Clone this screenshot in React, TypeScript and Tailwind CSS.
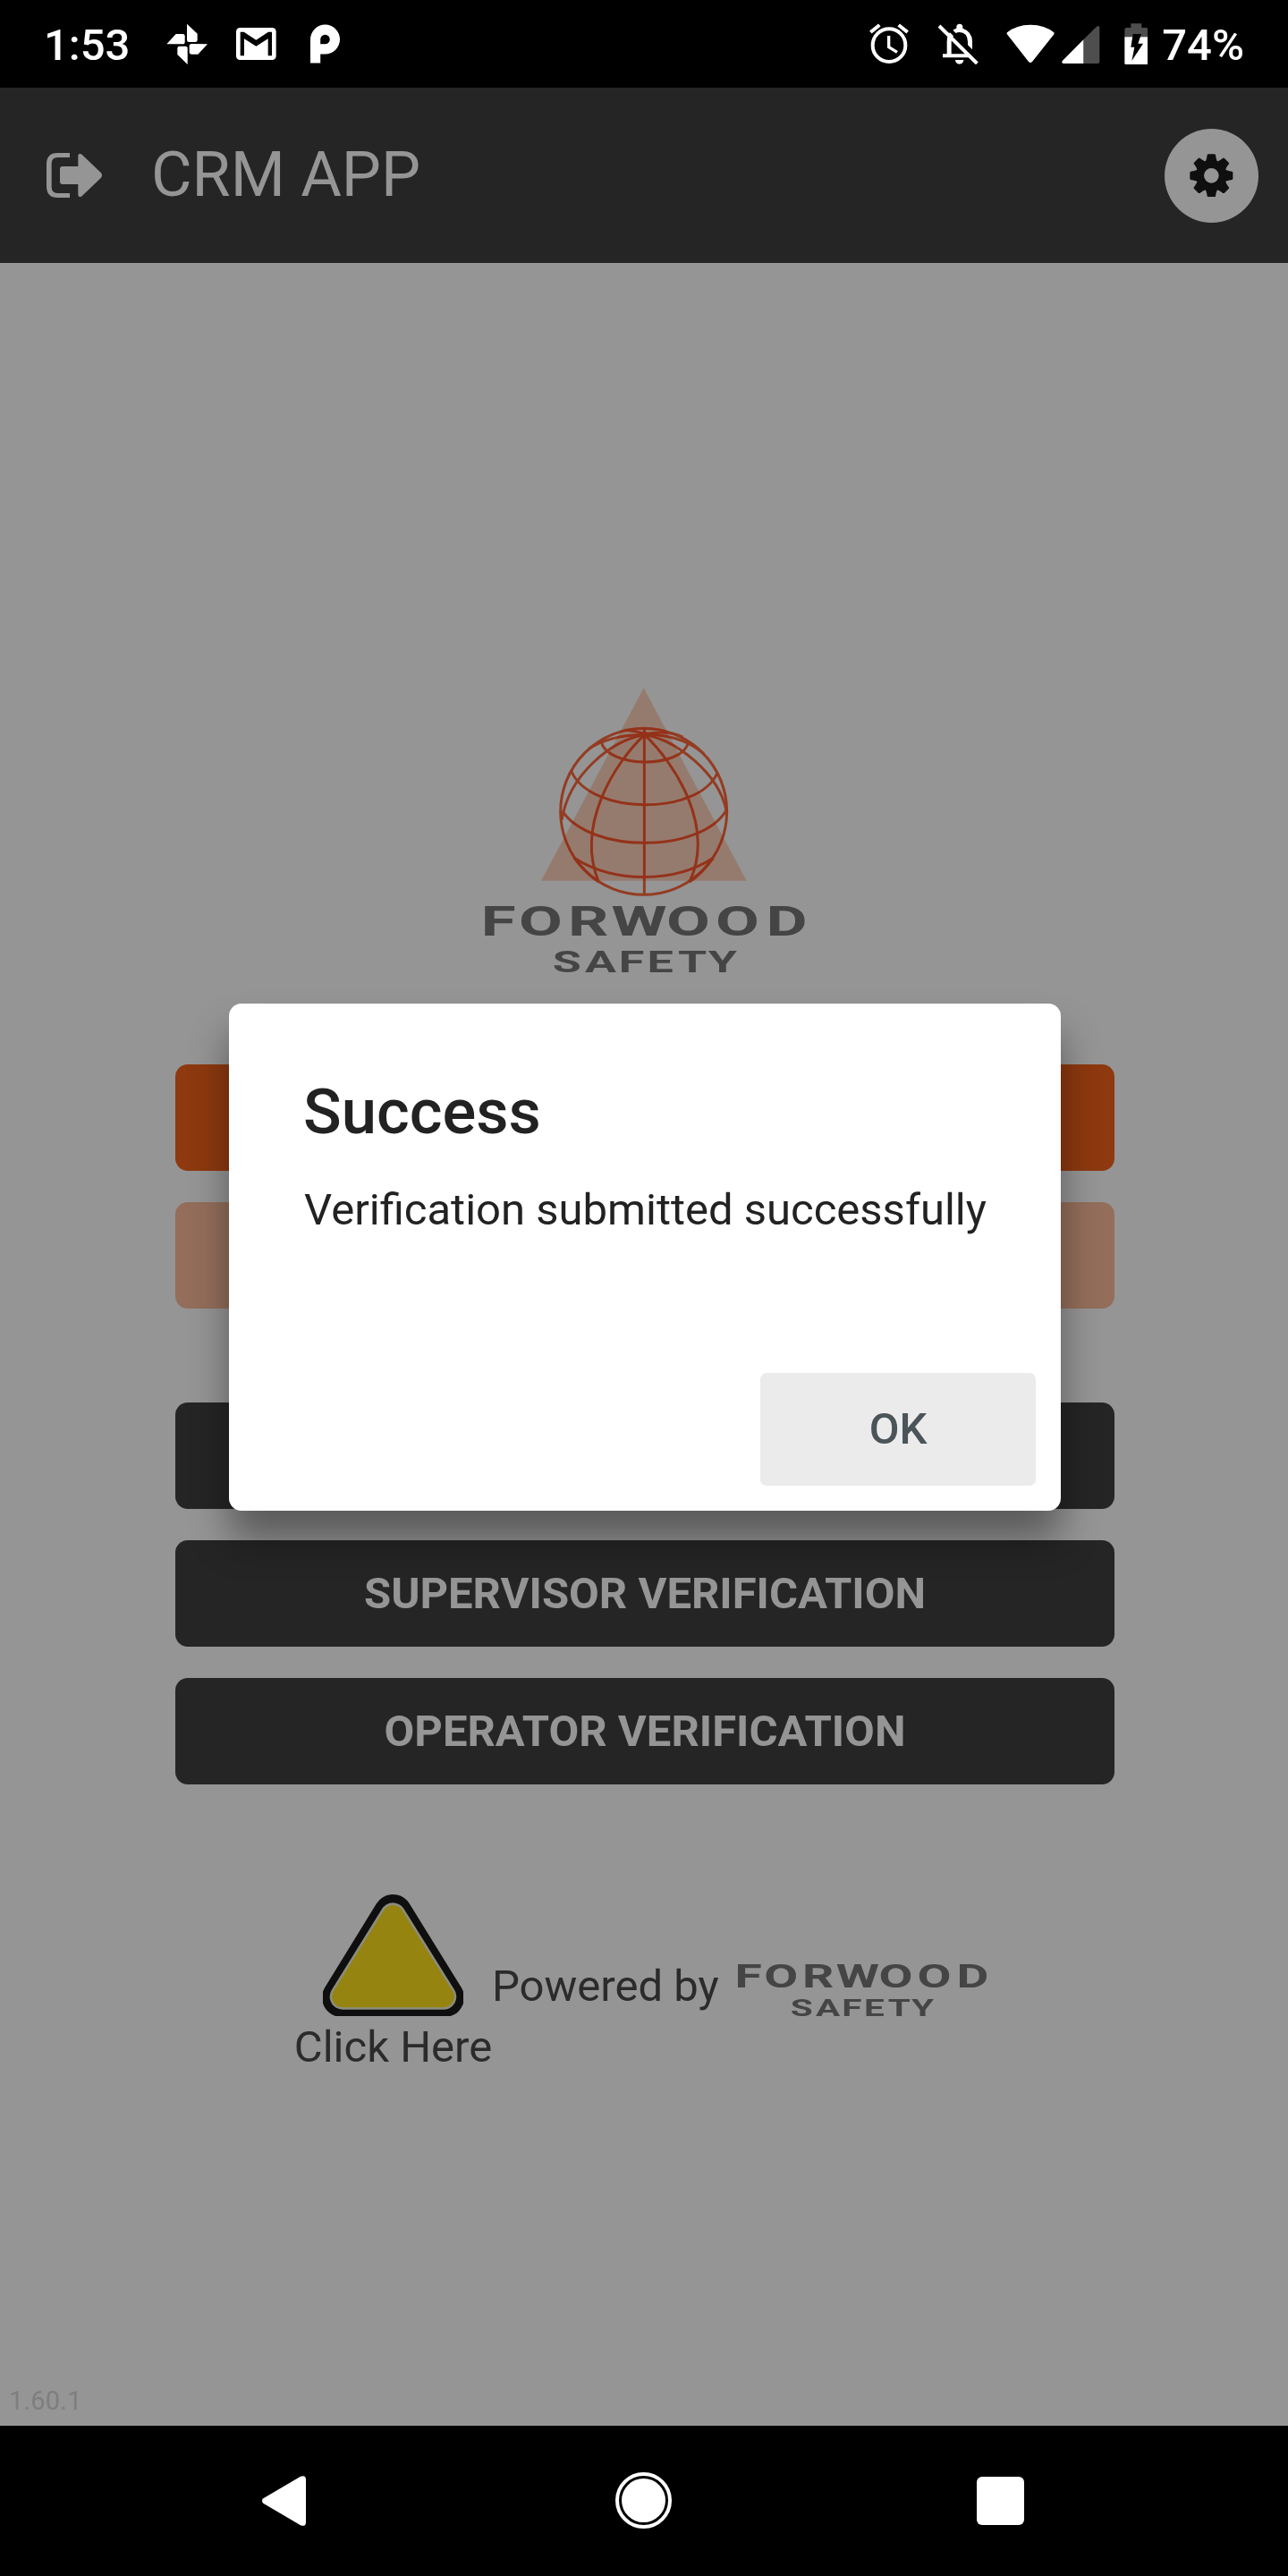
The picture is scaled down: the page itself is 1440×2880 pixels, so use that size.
const WORDMARK_FONT = "font-['Roboto','Liberation_Sans',sans-serif]";

// "FORWOOD / SAFETY" lettering, shared by the hero logo and the footer.
function WordmarkText() {
  return (
    <g fill="#454545" className={`${WORDMARK_FONT} font-bold`}>
      <text
        transform="translate(0 887) scale(1.53 1)"
        fontSize="139"
        x="35 117.500 225.500 320.500 441 549 660"
        y="0"
      >
        FORWOOD
      </text>
      <text
        transform="translate(0 1011) scale(1.53 1)"
        fontSize="102"
        x="191.800 263 337 399 466.600 533"
        y="0"
      >
        SAFETY
      </text>
    </g>
  );
}

function ForwoodLogo() {
  return (
    <svg viewBox="0 51 1200 1017" className="h-[339px] w-[400px] shrink-0">
      <g fill="none" stroke="#943c22" strokeWidth="9">
        <circle cx="599" cy="472" r="279" />
        <path d="M601 192V752" />
        <path d="M456 236C475 328 725 328 748 242" />
        <path d="M356 336C420 486 785 486 846 342" />
        <path d="M326 470C420 613 790 613 876 468" />
        <path d="M366 628C500 713 700 713 832 628" />
        <path d="M602 214C500 310 370 520 448 708" />
        <path d="M602 214C702 310 840 520 753 708" />
        <path d="M602 214C490 235 350 345 324 500" />
        <path d="M602 214C714 235 850 345 876 468" />
        <path d="M602 214C540 215 470 225 415 262" />
        <path d="M602 214C680 213 745 230 800 278" />
        <path d="M602 212C650 204 700 206 730 222" />
        <path d="M602 212C580 204 560 200 535 199" />
        <path d="M366 628C395 665 420 690 448 708" />
        <path d="M832 628C805 665 780 690 753 708" />
      </g>
      <circle cx="602" cy="215" r="12" fill="#943c22" />
      <path d="M599 57L944 704H255Z" fill="#ffd3bc" className="mix-blend-multiply" />
      <WordmarkText />
    </svg>
  );
}

function StatusBar() {
  return (
    <div className="flex h-[98px] shrink-0 items-center bg-black pl-[49px] text-[49px] font-medium text-white">
      <span className="w-[137px] pt-[3px] leading-none">1:53</span>
      <svg viewBox="558 78 140 140" className="h-[46.700px] w-[46.700px]" fill="currentColor">
        <path d="M627 80L662 113V134Q662 141 655 141H634Q627 141 627 134Z" />
        <path d="M696 148L664 182H642Q635 182 635 175V155Q635 147 642 147Z" />
        <path d="M629 216L595 183V162Q595 155 602 155H621Q629 155 629 162Z" />
        <path d="M559 148L590 114H613Q620 114 620 121V140Q620 148 613 148Z" />
      </svg>
      <svg viewBox="792 93 135 108" className="ml-[31px] h-[36px] w-[45px]">
        <rect x="792" y="93" width="134" height="108" rx="13" fill="#fff" />
        <path d="M806 107H818L859 134L900 107H912V187H899V130L859 155L819 130V187H806Z" fill="#000" />
      </svg>
      <svg viewBox="1040 84 100 132" className="ml-[38px] h-[44px] w-[33px]">
        <path
          d="M1040 215V135A50 50 0 1 1 1090 185H1074V215ZM1074 151H1090A16 16 0 1 0 1074 135Z"
          fill="#fff"
          fillRule="evenodd"
        />
      </svg>

      <div className="ml-auto flex items-center pr-[49px]">
        <svg viewBox="96 78 132 138" className="h-[46px] w-[44px]" fill="none" stroke="#fff">
          <circle cx="162" cy="152" r="55" strokeWidth="12" />
          <path d="M161 120V158L189 175" strokeWidth="10" />
          <path d="M100 108L130 84M224 108L194 84" strokeWidth="12" />
        </svg>
        <svg viewBox="326 78 140 140" className="ml-[32.500px] h-[46.700px] w-[46.700px]">
          <path d="M344 181H358V140Q358 118 368 109L380 121Q373 128 373 140V181H432L444 193H344Z" fill="#fff" />
          <path
            d="M378 101Q384 97 390 95V91A10 10 0 0 1 411 91V95Q443 106 443 140V166L428 151V140Q426 108 400 108Q394 108 388 111Z"
            fill="#fff"
          />
          <path d="M386 201H414A14 14 0 0 1 386 201Z" fill="#fff" />
          <path d="M332 87L459 213" stroke="#fff" strokeWidth="12" />
        </svg>
        <svg viewBox="556 78 162 132" className="ml-[30px] h-[44px] w-[54px]">
          <path d="M559 106Q590 80 637 80Q685 80 716 106Q718 109 715 113L643 204Q637 210 631 204L560 113Q556 109 559 106Z" fill="#fff" />
        </svg>
        <svg viewBox="743 84 128 130" className="mt-[2px] ml-[8px] h-[43.300px] w-[42.700px]">
          <path d="M816 133L860 89Q870 84 870 92V207Q870 213 864 213H816Z" fill="#4e4e4e" />
          <path d="M816 133V213H748Q740 211 746 203Z" fill="#fff" />
        </svg>
        <svg viewBox="950 77 80 140" className="ml-[27px] h-[46.700px] w-[26.700px]">
          <path d="M951 123V98Q951 92 957 92H972V78H1008V92H1023Q1029 92 1029 98V123Z" fill="#4e4e4e" />
          <path d="M951 123H1029V210Q1029 216 1023 216H957Q951 216 951 210Z" fill="#fff" />
          <path d="M979 113H1007L996 145H1013L975 203L984 157H972Z" fill="#000" />
        </svg>
        <span className="ml-[16px] pt-[3px] leading-none">74%</span>
      </div>
    </div>
  );
}

function AppHeader() {
  return (
    <header className="flex h-[196px] shrink-0 items-center bg-[#252525] pr-[33px] pl-[52px] text-[#959595]">
      <svg viewBox="156 513 186 150" className="h-[50px] w-[62px]" fill="currentColor">
        <path d="M234 513V528H193Q173 528 173 549V627Q173 648 193 648H234V663H193Q156 663 156 625V551Q156 513 193 513Z" />
        <path d="M210 558H262V522Q262 513 273 517L339 580Q345 588 339 596L273 659Q262 662 262 654V618H210Q201 618 201 609V567Q201 558 210 558Z" />
      </svg>
      <h1 className="mb-[3px] ml-[55px] text-[70px] leading-none font-normal">CRM APP</h1>
      <button className="ml-auto flex size-[105px] items-center justify-center rounded-full bg-[#959595]">
        <svg viewBox="-73 -73 146 146" className="size-[48.700px]" fill="#0f0f0f">
          <g>
            {[0, 45, 90, 135, 180, 225, 270, 315].map((deg) => (
              <path key={deg} d="M-21 -46Q-16 -52 -14 -69Q-13 -72 -10 -72H10Q13 -72 14 -69Q16 -52 21 -46Z" transform={`rotate(${deg})`} />
            ))}
            <path d="M-51 0A51 51 0 1 0 51 0A51 51 0 1 0 -51 0ZM-25 0A25 25 0 1 1 25 0A25 25 0 1 1 -25 0Z" fillRule="evenodd" />
          </g>
        </svg>
      </button>
    </header>
  );
}

const BUTTON = "flex h-[119px] items-center justify-center rounded-[14px] text-[49px] font-bold text-[#959595]";

function HomeScreen() {
  return (
    <main className="flex flex-1 flex-col items-center bg-[#959595] pt-[473px]">
      <ForwoodLogo />

      <div className="mt-[84px] ml-[2px] flex w-[1050px] flex-col gap-[35px]">
        <div className={`${BUTTON} bg-[#8e390f]`} />
        <div className={`${BUTTON} bg-[#946e5b]`} />
        <div className={`${BUTTON} mt-[70px] bg-[#252525]`} />
        <button className={`${BUTTON} bg-[#252525]`}>SUPERVISOR VERIFICATION</button>
        <button className={`${BUTTON} bg-[#252525]`}>OPERATOR VERIFICATION</button>
      </div>

      <div className="mt-[123px] flex w-full items-start pl-[329px] text-[49px] leading-[57px] text-[#2b2b2b]">
        <div className="flex w-[221px] flex-col items-center">
          <svg viewBox="183 84 471 408" className="h-[136px] w-[157px]" strokeLinejoin="round">
            <path d="M418 149L245 430H592Z" fill="#0f0f0f" stroke="#0f0f0f" strokeWidth="130" />
            <path d="M418 155L249 427H588Z" fill="#8c8c80" stroke="#8c8c80" strokeWidth="86" />
            <path d="M418 155L249 427H588Z" fill="#958410" stroke="#958410" strokeWidth="71" />
          </svg>
          <span className="mt-[6px] whitespace-nowrap">Click Here</span>
        </div>
        <span className="mt-[74px] whitespace-nowrap">Powered by</span>
        <svg viewBox="40 740 1140 320" className="mt-[65.600px] ml-[14px] h-[83px] w-[295.600px]">
          <WordmarkText />
        </svg>
      </div>

      <p className="mt-auto w-full pb-[11px] pl-[10px] text-[29px] leading-[34px] tracking-[0.200px] text-[#7e7e7e]">1.60.1</p>
    </main>
  );
}

function SuccessDialog() {
  return (
    <div className="absolute inset-x-0 top-[99px] bottom-[168px] flex items-center justify-center pl-[2px]">
      <div
        role="alertdialog"
        className="flex h-[567px] w-[930px] flex-col rounded-[14px] bg-white p-[28px] text-[#222] shadow-[0_32px_44px_rgba(0,0,0,0.4)]"
      >
        <h2 className="mt-[52px] ml-[55px] text-[70.500px] leading-[82px] font-medium">Success</h2>
        <p className="mt-[40px] ml-[56px] text-[49px] leading-[57px] whitespace-nowrap">Verification submitted successfully</p>
        <button className="mt-auto ml-auto h-[126px] w-[308px] rounded-[7px] bg-[#ebebeb] text-[49px] font-medium text-[#4a5459]">
          OK
        </button>
      </div>
    </div>
  );
}

function NavigationBar() {
  return (
    <nav className="flex h-[168px] shrink-0 bg-black pl-[293px]">
      <svg viewBox="879 384 147 168" className="mt-[56px] h-[56px] w-[49px]" fill="#fff">
        <path d="M883 460L1008 386Q1026 380 1026 397V539Q1026 556 1008 550L883 476Q875 468 883 460Z" />
      </svg>
      <div className="mt-[52px] ml-[346px] flex size-[63px] items-center justify-center rounded-full border-4 border-white">
        <div className="size-[49px] shrink-0 rounded-full bg-white" />
      </div>
      <div className="mt-[57px] ml-[340.500px] h-[54px] w-[53px] rounded-[6px] bg-white" />
    </nav>
  );
}

export default function App() {
  return (
    <div className="relative flex h-[2880px] w-[1440px] flex-col overflow-hidden font-['Roboto','Liberation_Sans',sans-serif]">
      <StatusBar />
      <AppHeader />
      <HomeScreen />
      <NavigationBar />
      <SuccessDialog />
    </div>
  );
}
